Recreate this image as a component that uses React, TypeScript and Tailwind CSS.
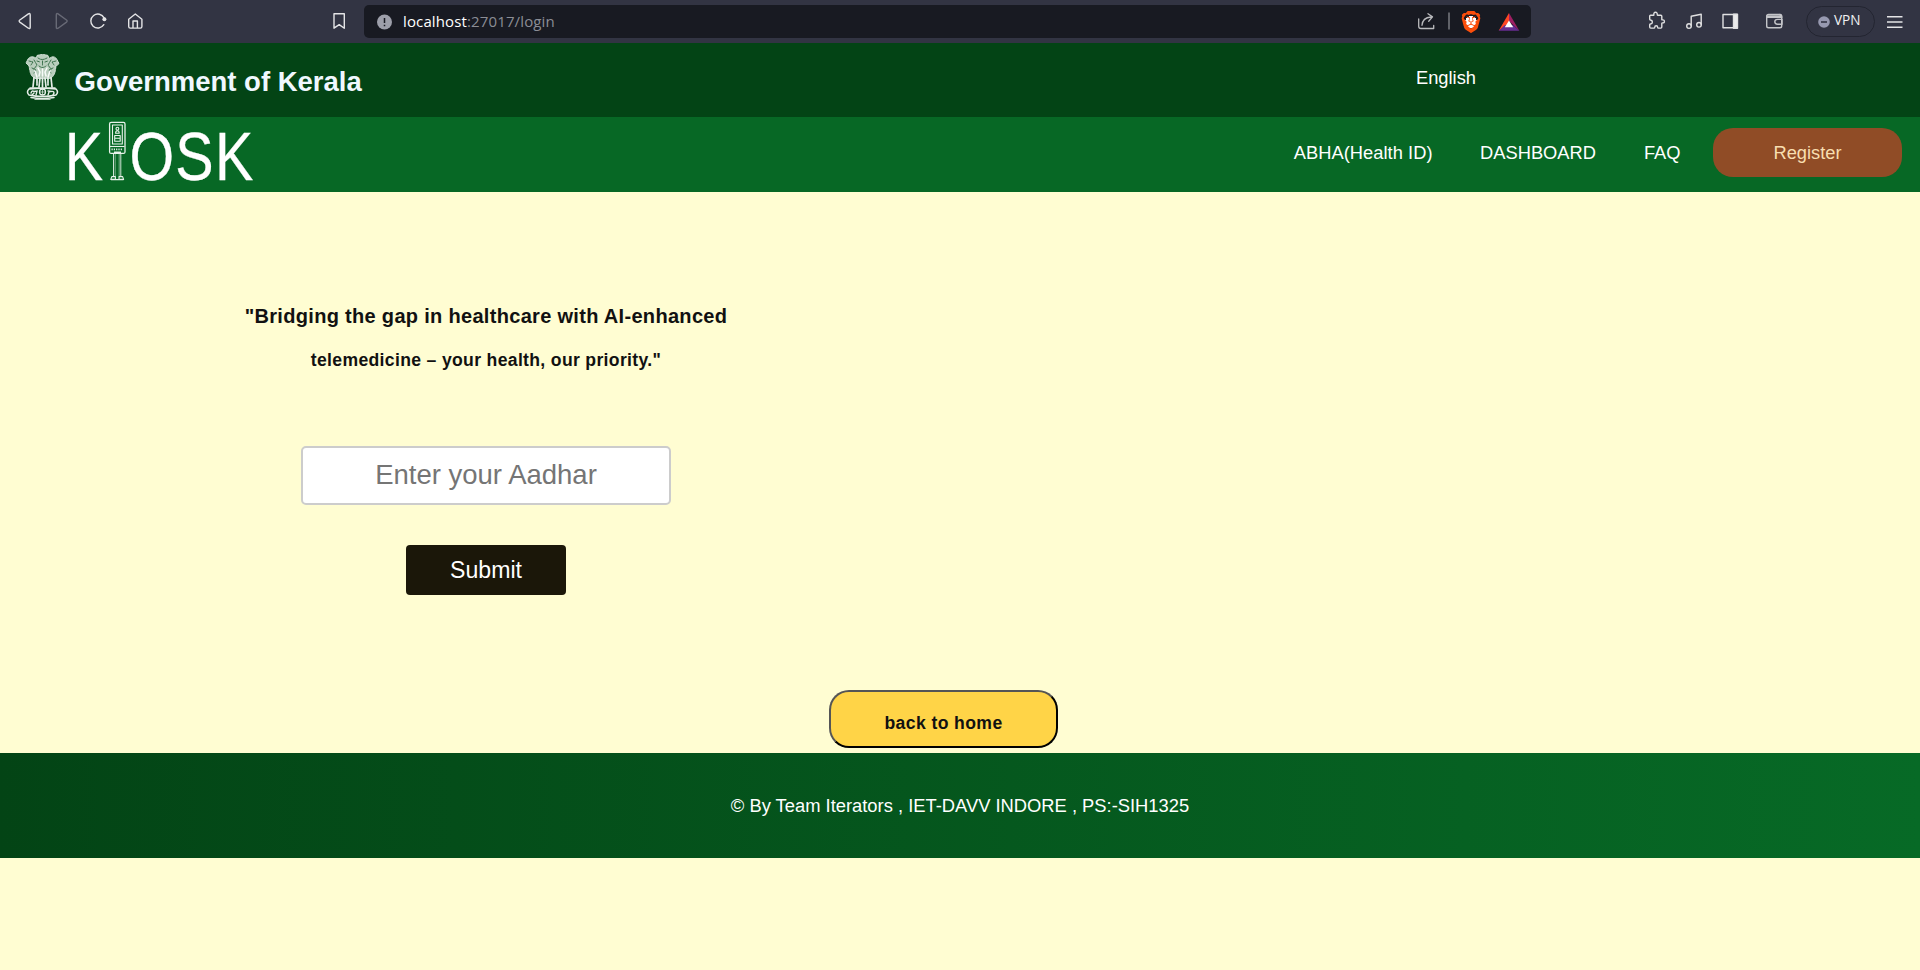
import React from "react";
import { SiBrave } from "react-icons/si";

function BrowserBar() {
  return (
    <div className="flex h-[43px] w-full items-center bg-[#323443] text-[#dcdcde]">
      <svg className="h-[43px] w-[364px] shrink-0" viewBox="0 0 364 43" fill="none" stroke="#e4e4e6" strokeWidth="1.4" strokeLinejoin="round" strokeLinecap="round">
        <path d="M28.4 13.9q1.8-1 1.8 1v12.3q0 2-1.8 1l-8.6-6.1q-1.300-1.100 0-2.100z" />
        <path d="M58.100 13.900q-1.800-1-1.800 1v12.300q0 2 1.800 1l8.400-6.100q1.300-1.100 0-2.100z" stroke="#686a76" />
        <path d="M103.800 24.700a7 7 0 1 1 .3-6.800" />
        <circle cx="104.400" cy="19.300" r="2" fill="#e4e4e6" stroke="none" />
        <path d="M128.700 19.200 135.300 14l6.600 5.200v7.300q0 1.600-1.600 1.600h-10q-1.600 0-1.600-1.600zM133 28v-7h4.400v7" />
        <path d="M334 13.700h10.300v14.500l-5.100-3.600-5.200 3.600z" />
      </svg>
      <div className="flex h-[33px] w-[1167px] shrink-0 items-center rounded-[5px] bg-[#181a22]">
        <svg className="ml-3 h-4 w-4 shrink-0" viewBox="0 0 16 16">
          <circle cx="8.500" cy="8" r="7.500" fill="#9d9faa" />
          <path d="M8.500 4v5M8.500 10.700v1.500" stroke="#181a22" strokeWidth="1.500" />
        </svg>
        <div className="mb-[2px] ml-[11px] grow font-['Open_Sans','Noto_Sans',sans-serif] text-[15px] leading-5 tracking-[0.13px] text-[#8b8d95]">
          <span className="text-white">localhost</span>:27017/login
        </div>
        <svg className="h-[33px] w-[48px] shrink-0" viewBox="1410 5 48 33" fill="none" stroke="#b9babd" strokeWidth="1.3" strokeLinecap="round" strokeLinejoin="round">
          <path d="M1418.700 19v7.200q0 2.300 2.300 2.300h12.700v-3M1422 25.300q.5-7.600 9-8.300M1428 13.700l4.500 3.200-3.800 4.300" />
          <path d="M1449 12.500v17" strokeWidth="1.600" strokeLinecap="butt" stroke="#74757b" />
        </svg>
        <span className="ml-1 flex h-[22px] w-[18px] items-center justify-center bg-[radial-gradient(circle,#fff_0_6px,transparent_6px)]">
          <SiBrave className="h-[22px] w-[22px] shrink-0 text-[#fb4e0b]" />
        </span>
        <svg className="mr-[11px] ml-[18px] h-5 w-[22px] shrink-0" viewBox="0 0 22 20">
          <path d="M11 1 .7 18.800 11 12.300z" fill="#ff4724" />
          <path d="M11 1v8l10.300 9.800z" fill="#9e1f63" />
          <path d="M.7 18.800h20.600L15 13H7z" fill="#662d91" />
          <path d="m11 8.500 4.200 6.800H6.800z" fill="#fff" />
        </svg>
      </div>
      <svg className="h-[43px] w-[274px] shrink-0" viewBox="1531 0 274 43" fill="none" stroke="#e0e0e1" strokeWidth="1.400" strokeLinecap="round" strokeLinejoin="round">
        <path d="M1649.700 16q0-.8.8-.8h3.100q.5 0 .3-.8-.3-2.100 1.600-2.100t1.700 2.100q-.1.800.5.800h3.100q1 0 1 1v3.200q0 .6.800.5 1.800-.2 1.800 1.500t-1.800 1.500q-.8-.1-.8.5v3.700q0 1-1 1h-2.400q-.7 0-.7-.6 0-1.700-1.500-1.700t-1.500 1.700q0 .6-.7.600h-3.300q-1 0-1-1v-2.400q0-.6.7-.7 2-.2 2-2t-2-2q-.7 0-.7-.7z" />
        <path d="M1691.200 25.700v-9.500l10-2v10.300" />
        <circle cx="1689" cy="26.100" r="2.300" />
        <circle cx="1699" cy="24.800" r="2.300" />
        <path d="M1723 14.500h14v13.300h-14z" />
        <path d="M1733.500 14.200h4v14h-4z" fill="#ebebec" />
        <g stroke="#c4c5c9">
          <rect x="1766.700" y="14.400" width="15" height="13.400" rx="1.800" />
          <path d="M1767 17.300h14.600M1767 16h14M1780 14.500q1.700.4 1.700 3.200" />
          <path d="M1782 19.400h-4.500q-2.700 0-2.700 2.400t2.700 2.400h4.500z" />
        </g>
      </svg>
      <div className="ml-px flex h-[31px] w-[69px] shrink-0 items-center rounded-full border border-[#232531]">
        <svg className="ml-[11px] h-3 w-3 shrink-0" viewBox="0 0 12 12">
          <circle cx="6" cy="6" r="5.800" fill="#9799b0" />
          <path d="M3 6h6" stroke="#323443" strokeWidth="1.600" />
        </svg>
        <span className="mb-[3px] ml-[4px] font-['Open_Sans','Noto_Sans',sans-serif] text-[13.6px] leading-4 text-[#f0f0f2]">VPN</span>
      </div>
      <svg className="ml-[12px] h-[14px] w-4" viewBox="0 0 16 14" stroke="#e4e4e6" strokeWidth="1.400">
        <path d="M0 1.700h15.500M0 7h15.500M0 12.300h15.500" />
      </svg>
    </div>
  );
}

function Emblem() {
  return (
    <svg className="h-[46px] w-[35px] shrink-0" viewBox="0 0 35 46" fill="none" stroke="#e6eee8" strokeWidth="1" strokeLinecap="round">
      <path d="M12 1.500q5.500-2 11 0l1 3q5-4 8 1l2 4-3 3-1 6q-2 5-5 6H10q-4-2-5-7L4 12 1 9l2-4q3-4 8-1z" fill="#b9cebd" strokeWidth=".8" strokeDasharray="2 1" />
      <path d="M13 4q4 3 9 0M12 7l3 1m5 0 3-1M17.500 7v4M14 12q3.500 3 7 0M4 7l4 1-2 3m25-4-4 1 2 3M9 6l3 5-3 4m17-9-3 5 3 4M7 14l4 2-2 3m19-5-4 2 2 3" stroke="#1c5a30" strokeWidth=".8" strokeDasharray="2.500 1" />
      <path d="M13 14l2 4-1 4m8-8-2 4 1 4M17.500 15v7M10 17l2 6m13-6-2 6" stroke="#f7fbf8" strokeWidth="1.500" />
      <path d="M9 23.500 8 33M12 24v7M15 24l-1 9M17.500 24v9M20 24l1 9M23 24v7M26 23.500l1 9.500" strokeWidth="1.700" strokeDasharray="5 .7" />
      <path d="M5 34h25M4 35q-3 3 0 6 13 3 27 0 3-3 0-6-13-1.500-27 0z" strokeWidth="1.500" />
      <path d="M6 39q1-3 3-1.500l3-.5-1 4m-4 0 2-2m14-2 3 .5q3-.5 3 1.500l-1 2m-5 0 1-3" strokeWidth="1.400" />
      <circle cx="17.500" cy="38" r="3" strokeWidth="1.300" />
      <path d="M17.500 35.500v5M15 38h5" strokeWidth=".7" />
      <path d="M6 43.500q11 2 23 0M10 45h15" strokeWidth="1.500" />
    </svg>
  );
}

function KioskLogo() {
  return (
    <svg className="ml-16 h-[75px] w-[200px] shrink-0" viewBox="64 117 200 75">
      <g fill="#fff" stroke="#fff" strokeWidth=".3" fontFamily="'Liberation Sans', Arial, sans-serif" fontSize="68">
        <text transform="translate(64.700 179.500) scale(.845 1)">K</text>
        <text transform="translate(129.400 179.500) scale(.845 1)" letterSpacing="1.500">OSK</text>
      </g>
      <g fill="none" stroke="#e8f2ea" strokeWidth="1.100" strokeLinejoin="round">
        <rect x="109.600" y="122.400" width="15.400" height="31" rx="1.500" strokeWidth="1.300" />
        <rect x="112.500" y="125" width="9.800" height="19" />
        <path d="M110 146.500h14.500" />
        <path d="M111.500 149.300h11.500" strokeDasharray="1.200 1.100" strokeWidth="1.700" />
        <circle cx="117.400" cy="128.700" r="1.400" />
        <path d="M115.600 133.200q0-2.400 1.800-2.400t1.800 2.400zM114.700 135.500h5.500v5.800h-5.500zM115 138.300h5" />
        <path d="M113.500 153.500v23M120.800 153.500v23" strokeWidth=".9" />
        <path d="M115.200 153.500v23M119.200 153.500v23" strokeWidth=".5" />
        <path d="M114 152.500h7" strokeWidth="2" />
        <path d="M110.800 179.400l1-2.800h3.600v2.800zM119 179.400v-2.800h3.600l1 2.800zM111 179.600h12.500" />
      </g>
    </svg>
  );
}

export default function App() {
  return (
    <div className="flex h-[970px] w-full flex-col overflow-hidden bg-[#fffdd2] font-['Liberation_Sans',Arial,sans-serif]">
      <BrowserBar />
      <header>
        <div className="flex h-[74px] bg-[#034415] pl-[25px] text-white">
          <div className="flex w-[1391px] items-start pt-[11px]">
            <Emblem />
            <h1 className="mt-[12px] ml-[14.5px] text-[27.5px] leading-8 font-bold text-[#f0f8ff]">Government of Kerala</h1>
          </div>
          <span className="mt-[23px] text-[18.3px] leading-6">English</span>
        </div>
        <nav className="flex h-[75px] items-start justify-between bg-[#076825] text-[18.3px] leading-6 text-white">
          <KioskLogo />
          <div className="mr-[18px] flex pt-[11px]">
            <a className="mt-[13px] mr-[47.500px] tracking-[0.05px]">ABHA(Health ID)</a>
            <a className="mt-[13px] mr-[48px]">DASHBOARD</a>
            <a className="mt-[13px] mr-[32.500px]">FAQ</a>
            <button className="h-[49px] w-[189px] rounded-[20px] bg-[#904c26] text-[#f8deb0]">Register</button>
          </div>
        </nav>
      </header>
      <main className="flex h-[561px] flex-col">
        <section className="flex w-[972px] flex-col items-center pt-[110px] text-[#111]">
          <p className="text-[20px] leading-7 font-bold tracking-[0.31px]">"Bridging the gap in healthcare with AI-enhanced</p>
          <p className="mt-4 text-[17.6px] leading-7 font-bold tracking-[0.33px]">telemedicine – your health, our priority."</p>
          <input
            className="mt-[72px] h-[59px] w-[370px] rounded-[5px] border-2 border-[#ccc] bg-white pb-px text-center text-[27.5px] placeholder:text-[#757575]"
            placeholder="Enter your Aadhar"
          />
          <button className="mt-10 h-[50px] w-40 rounded-[4px] bg-[#1b1709] text-[23.1px] leading-8 text-white">Submit</button>
        </section>
        <button className="mt-[95px] ml-[829px] h-[58px] w-[229px] rounded-[20px] border-2 border-t-[#555] border-r-black border-b-black border-l-[#555] bg-[#ffd447] pt-[8px] text-[17.6px] font-bold tracking-[0.4px] text-[#111]">
          back to home
        </button>
      </main>
      <footer className="flex h-[105px] items-start justify-center bg-[linear-gradient(90deg,#034415,#076a26)] pt-[41px] text-[18.35px] leading-6 text-white">
        © By Team Iterators , IET-DAVV INDORE , PS:-SIH1325
      </footer>
    </div>
  );
}
